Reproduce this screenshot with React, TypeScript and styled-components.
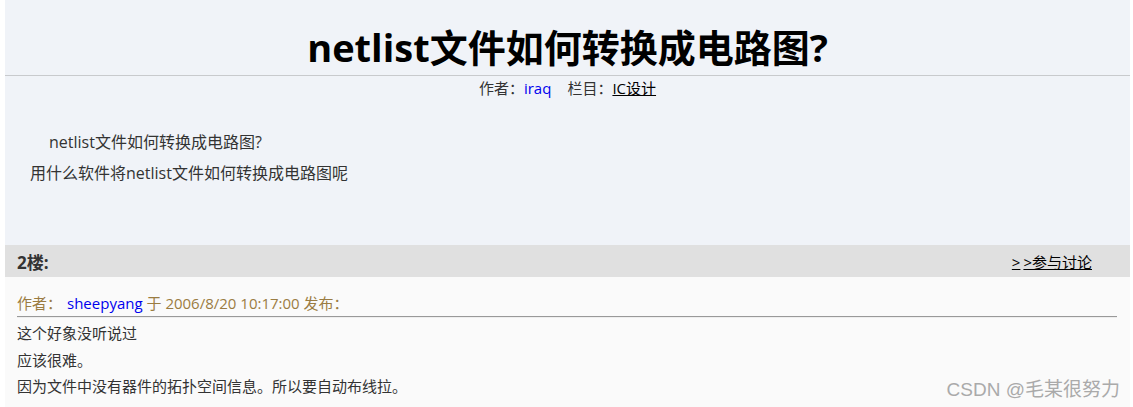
import React from 'react';
import styled, { createGlobalStyle } from 'styled-components';

const GlobalStyle = createGlobalStyle`
  html, body {
    margin: 0;
    padding: 0;
    background: #fff;
  }
  body {
    font-family: "Open Sans", "Noto Sans CJK SC", sans-serif;
    color: #333;
  }
`;

const Page = styled.div`
  position: relative;
  margin-left: 5px;
  width: 1125px;
  height: 407px;
  overflow: hidden;
  background: #f0f3f8;
`;

const Title = styled.h1`
  margin: 0;
  height: 76px;
  box-sizing: border-box;
  padding-top: 22px;
  border-bottom: 1px solid #c8cacd;
  text-align: center;
  font-size: 38px;
  line-height: 50px;
  font-weight: 700;
  color: #000;
`;

const Meta = styled.div`
  text-align: center;
  font-size: 15px;
  line-height: 24px;
  color: #333;
`;

const MetaLink = styled.a<{ $underline?: boolean }>`
  color: ${(p) => (p.$underline ? '#000' : '#0000ee')};
  text-decoration: ${(p) => (p.$underline ? 'underline' : 'none')};
  margin-right: ${(p) => (p.$underline ? '0' : '16px')};
`;

const Body = styled.div`
  height: 145px;
  box-sizing: border-box;
  padding: 27px 0 0 25px;
  font-size: 16px;
  line-height: 31px;
  color: #333;
`;

const Para = styled.p<{ $indent?: boolean }>`
  margin: 0;
  padding-left: ${(p) => (p.$indent ? '19px' : '0')};
`;

const FloorBar = styled.div`
  display: flex;
  justify-content: space-between;
  align-items: center;
  height: 32px;
  padding: 0 38px 0 12px;
  background: #e0e0e0;
`;

const FloorLabel = styled.span`
  font-size: 17px;
  font-weight: 700;
  color: #333;
`;

const JoinLink = styled.a`
  font-size: 15px;
  color: #000;
  text-decoration: underline;
`;

const Arrow = styled.span`
  margin-right: 3px;
`;

const Reply = styled.div`
  height: 130px;
  box-sizing: border-box;
  padding: 14px 13px 0 12px;
  background: #fafafa;
`;

const ReplyHead = styled.div`
  font-size: 15px;
  line-height: 24px;
  color: #9a7c42;
  padding-bottom: 1px;
`;

const Author = styled.span`
  color: #0000ee;
  margin-left: 5px;
`;

const Rule = styled.hr`
  margin: 0 0 2px;
  border: none;
  border-top: 1px solid #999;
  border-bottom: 1px solid #eee;
`;

const Line = styled.p`
  margin: 0;
  font-size: 15px;
  line-height: 26.5px;
  color: #333;
`;

const Watermark = styled.div`
  position: absolute;
  right: 10px;
  bottom: 6px;
  font-size: 19px;
  color: #aaa;
  font-family: "Liberation Sans", "Noto Sans CJK SC", sans-serif;
`;

const App: React.FC = () => {
  return (
    <Page>
      <GlobalStyle />
      <Title>netlist文件如何转换成电路图?</Title>
      <Meta>
        作者：<MetaLink href="#">iraq</MetaLink>栏目：<MetaLink href="#" $underline>IC设计</MetaLink>
      </Meta>
      <Body>
        <Para $indent>netlist文件如何转换成电路图?</Para>
        <Para>用什么软件将netlist文件如何转换成电路图呢</Para>
      </Body>
      <FloorBar>
        <FloorLabel>2楼:</FloorLabel>
        <JoinLink href="#">
          <Arrow>&gt;</Arrow>&gt;参与讨论
        </JoinLink>
      </FloorBar>
      <Reply>
        <ReplyHead>
          作者：<Author>sheepyang</Author> 于 2006/8/20 10:17:00 发布：
        </ReplyHead>
        <Rule />
        <Line>这个好象没听说过</Line>
        <Line>应该很难。</Line>
        <Line>因为文件中没有器件的拓扑空间信息。所以要自动布线拉。</Line>
      </Reply>
      <Watermark>CSDN @毛某很努力</Watermark>
    </Page>
  );
};

export default App;
